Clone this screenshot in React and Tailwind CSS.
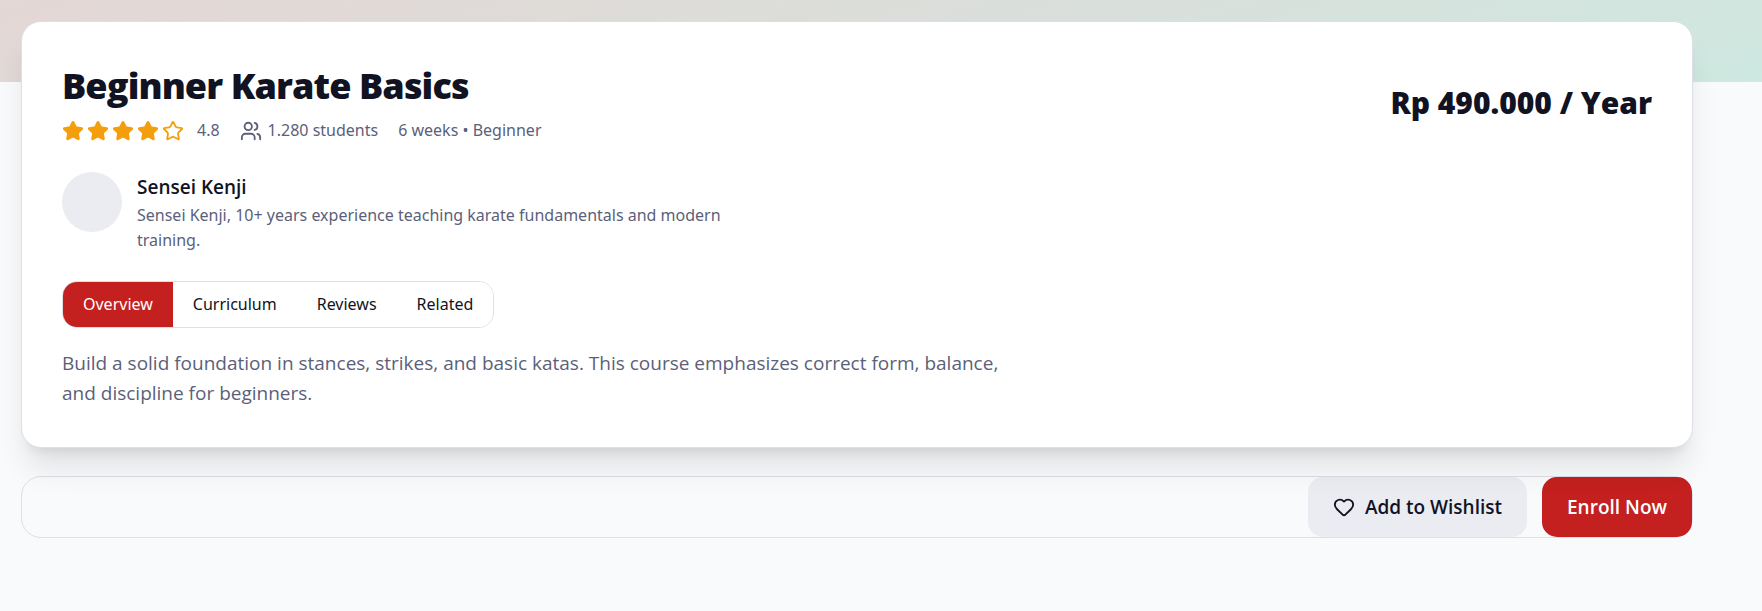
import React, { useState } from 'react';
import { Heart, Star, Users } from 'lucide-react';

const course = {
  title: 'Beginner Karate Basics',
  rating: 4.8,
  students: '1.280',
  duration: '6 weeks',
  level: 'Beginner',
  price: 'Rp 490.000 / Year',
  instructor: {
    name: 'Sensei Kenji',
    bio: 'Sensei Kenji, 10+ years experience teaching karate fundamentals and modern training.',
  },
  overview:
    'Build a solid foundation in stances, strikes, and basic katas. This course emphasizes correct form, balance, and discipline for beginners.',
};

const tabs = ['Overview', 'Curriculum', 'Reviews', 'Related'];

const Rating = ({ value }) => (
  <div className="flex items-center gap-[13px]">
    <div className="flex gap-[3px] text-[#f59e0b]">
      {[1, 2, 3, 4, 5].map((n) => (
        <Star key={n} size={22} fill={n <= Math.floor(value) ? 'currentColor' : 'none'} />
      ))}
    </div>
    <span>{value}</span>
  </div>
);

const App = () => {
  const [activeTab, setActiveTab] = useState('Overview');
  const [wishlisted, setWishlisted] = useState(false);

  return (
    <div className="min-h-screen bg-[#f9fafc] font-['Open_Sans',sans-serif] text-[#111322]">
      {/* Hero band */}
      <div className="h-[82px] bg-linear-165 from-[#e4d7d5] via-[#dadeda] to-[#cde9e1]" />

      <main className="-mt-[61px] pl-[21px] pr-[69px]">
        {/* Course card */}
        <section className="relative z-10 flex items-start justify-between rounded-[20px] border border-[#dddfe6] bg-white px-10 pt-10 pb-[39px] shadow-[0_25px_31px_-6px_rgba(0,0,0,0.1),0_10px_12px_-8px_rgba(0,0,0,0.1)]">
          <div className="min-w-0">
            <h1 className="text-[36px] leading-[48px] font-extrabold tracking-tight">{course.title}</h1>

            <div className="mt-2 flex items-center gap-5 font-['Noto_Sans',sans-serif] text-base leading-[25px] text-[#5b5f7a]">
              <Rating value={course.rating} />
              <div className="flex items-center gap-[6px]">
                <Users size={22} />
                <span>{course.students} students</span>
              </div>
              <span>
                {course.duration} • {course.level}
              </span>
            </div>

            {/* Instructor */}
            <div className="mt-[29px] flex items-start gap-[15px]">
              <div className="size-[60px] shrink-0 rounded-full bg-[#ebecf2]" />
              <div className="max-w-[640px]">
                <p className="text-[19px] leading-[31px] font-semibold">{course.instructor.name}</p>
                <p className="font-['Noto_Sans',sans-serif] text-base leading-[25px] text-[#5b5f7a]">
                  {course.instructor.bio}
                </p>
              </div>
            </div>

            {/* Tabs */}
            <div className="mt-7 flex w-fit overflow-hidden rounded-[15px] border border-[#dddfe6] font-['Noto_Sans',sans-serif]">
              {tabs.map((tab) => (
                <button
                  key={tab}
                  onClick={() => setActiveTab(tab)}
                  className={`px-5 py-[10px] text-base leading-[25px] ${
                    activeTab === tab ? 'bg-[#c3201f] text-white' : 'bg-white'
                  }`}
                >
                  {tab}
                </button>
              ))}
            </div>

            <p className="mt-5 max-w-[960px] text-[19px] leading-[30px] text-[#5b5f7a]">{course.overview}</p>
          </div>

          <p className="mt-[21px] shrink-0 text-[30px] leading-[40px] font-extrabold">{course.price}</p>
        </section>

        {/* Action bar */}
        <div className="mt-7 flex justify-end gap-[15px] rounded-[20px] border border-[#dddfe6]">
          <button
            onClick={() => setWishlisted(!wishlisted)}
            className="flex items-center gap-[10px] rounded-[15px] bg-[#ebecf2] px-[25px] py-[15px] text-[19px] leading-[30px] font-semibold"
          >
            <Heart size={22} fill={wishlisted ? 'currentColor' : 'none'} />
            Add to Wishlist
          </button>
          <button className="rounded-[15px] bg-[#c3201f] px-[25px] py-[15px] text-[19px] leading-[30px] font-semibold text-white">
            Enroll Now
          </button>
        </div>
      </main>
    </div>
  );
};

export default App;
